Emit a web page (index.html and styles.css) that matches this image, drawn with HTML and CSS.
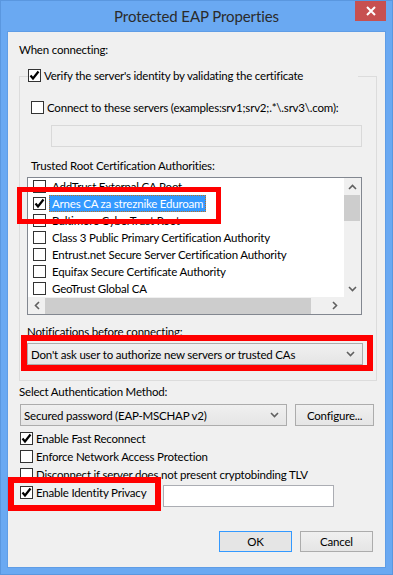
FILE: index.html
```html
<!DOCTYPE html>
<html lang="en">
<head>
    <meta charset="UTF-8">
    <meta name="viewport" content="width=device-width, initial-scale=1.0">
    <title>Protected EAP Properties</title>
    <link rel="stylesheet" href="styles.css">
</head>
<body>
    <div class="window">
        <div class="titlebar">
            <span class="title">Protected EAP Properties</span>
            <span class="close-btn">
                <svg width="10" height="10" viewBox="0 0 10 10"><path d="M1 1 L9 9 M9 1 L1 9" stroke="#fff" stroke-width="2"/></svg>
            </span>
        </div>
        <div class="client">
            <div class="label top-label">When connecting:</div>

            <div class="group">
                <div class="group-head">
                    <span class="box checked"><svg viewBox="0 0 11 11"><path d="M1.5 5.5 L4 8.5 L9.5 1.5" /></svg></span>
                    <span>Verify the server's identity by validating the certificate</span>
                </div>
                <div class="check-row servers-row">
                    <span class="box"></span>
                    <span>Connect to these servers (examples:srv1;srv2;.*\.srv3\.com):</span>
                </div>
                <div class="textbox disabled servers-input"></div>
                <div class="label inner-label">Trusted Root Certification Authorities:</div>

                <div class="listbox">
                    <div class="list-main">
                        <div class="rows">
                            <div class="row"><span class="box"></span><span class="item">AddTrust External CA Root</span></div>
                            <div class="row"><span class="box checked"><svg viewBox="0 0 11 11"><path d="M1.5 5.5 L4 8.5 L9.5 1.5" /></svg></span><span class="item selected">Arnes CA za streznike Eduroam</span></div>
                            <div class="row"><span class="box"></span><span class="item">Baltimore CyberTrust Root</span></div>
                            <div class="row"><span class="box"></span><span class="item">Class 3 Public Primary Certification Authority</span></div>
                            <div class="row"><span class="box"></span><span class="item">Entrust.net Secure Server Certification Authority</span></div>
                            <div class="row"><span class="box"></span><span class="item">Equifax Secure Certificate Authority</span></div>
                            <div class="row"><span class="box"></span><span class="item">GeoTrust Global CA</span></div>
                        </div>
                        <div class="vscroll">
                            <span class="arrow"><svg width="9" height="6" viewBox="0 0 9 6"><path d="M1 5 L4.5 1.5 L8 5" /></svg></span>
                            <span class="vthumb"></span>
                            <span class="vtrack"></span>
                            <span class="arrow"><svg width="9" height="6" viewBox="0 0 9 6"><path d="M1 1 L4.5 4.5 L8 1" /></svg></span>
                        </div>
                    </div>
                    <div class="hscroll-row">
                        <div class="hscroll">
                            <span class="arrow"><svg width="6" height="9" viewBox="0 0 6 9"><path d="M5 1 L1.5 4.5 L5 8" /></svg></span>
                            <span class="hthumb"></span>
                            <span class="arrow"><svg width="6" height="9" viewBox="0 0 6 9"><path d="M1 1 L4.5 4.5 L1 8" /></svg></span>
                        </div>
                        <div class="corner"></div>
                    </div>
                </div>

                <div class="label inner-label notif-label">Notifications before connecting:</div>
                <div class="combo notif-combo">
                    <span>Don't ask user to authorize new servers or trusted CAs</span>
                    <svg width="9" height="6" viewBox="0 0 9 6"><path d="M1 1 L4.5 4.5 L8 1" /></svg>
                </div>
            </div>

            <div class="label method-label">Select Authentication Method:</div>
            <div class="auth-row">
                <div class="combo auth-combo">
                    <span>Secured password (EAP-MSCHAP v2)</span>
                    <svg width="9" height="6" viewBox="0 0 9 6"><path d="M1 1 L4.5 4.5 L8 1" /></svg>
                </div>
                <button class="btn configure">Configure...</button>
            </div>

            <div class="options">
                <div class="check-row opt">
                    <span class="box checked"><svg viewBox="0 0 11 11"><path d="M1.5 5.5 L4 8.5 L9.5 1.5" /></svg></span>
                    <span>Enable Fast Reconnect</span>
                </div>
                <div class="check-row opt">
                    <span class="box"></span>
                    <span>Enforce Network Access Protection</span>
                </div>
                <div class="check-row opt">
                    <span class="box"></span>
                    <span>Disconnect if server does not present cryptobinding TLV</span>
                </div>
                <div class="privacy-row">
                    <div class="check-row opt privacy-check">
                        <span class="box checked"><svg viewBox="0 0 11 11"><path d="M1.5 5.5 L4 8.5 L9.5 1.5" /></svg></span>
                        <span>Enable Identity Privacy</span>
                    </div>
                    <div class="textbox privacy-input"></div>
                </div>
            </div>

            <div class="buttons">
                <button class="btn default">OK</button>
                <button class="btn">Cancel</button>
            </div>

            <!-- red annotation boxes -->
            <div class="mark mark-list"></div>
            <div class="mark mark-notif"></div>
            <div class="mark mark-privacy"></div>
        </div>
    </div>
</body>
</html>
```

FILE: styles.css
```css
* {
    box-sizing: border-box;
}
body {
    margin: 0;
    font-family: Lato, "Noto Sans", sans-serif;
    font-size: 11.5px;
    letter-spacing: -0.2px;
    color: #000;
}
.window {
    width: 393px;
    height: 575px;
    background-color: #6aa9f2;
    border: 1px solid #5a97df;
    padding: 0 6px 6px 6px;
    display: flex;
    flex-direction: column;
}
.titlebar {
    height: 30px;
    position: relative;
    display: flex;
    align-items: center;
    justify-content: center;
}
.title {
    font-size: 15px;
    letter-spacing: -0.1px;
    color: #2b2b2b;
    margin-top: -1px;
}
.close-btn {
    position: absolute;
    right: 0;
    top: 0;
    width: 31px;
    height: 20px;
    background-color: #c75050;
    display: flex;
    align-items: center;
    justify-content: center;
}
.client {
    position: relative;
    flex: 1;
    background-color: #f0f0f0;
    border: 1px solid #5f9de6;
    padding: 0 11px 0 11px;
    display: flex;
    flex-direction: column;
}
.label {
    line-height: 16px;
    height: 16px;
    white-space: nowrap;
}
.top-label {
    margin-top: 10px;
}
.group {
    margin-top: 18px;
    border: 1px solid #dcdcdc;
    width: 358px;
    padding-bottom: 15px;
}
.group-head {
    margin-top: -10px;
    margin-left: 8px;
    width: 330px;
    height: 16px;
    background-color: #f0f0f0;
    display: flex;
    align-items: center;
    gap: 3px;
    white-space: nowrap;
}
.box {
    width: 13px;
    height: 13px;
    flex: none;
    border: 1px solid #333;
    background-color: #fff;
    display: inline-flex;
    align-items: center;
    justify-content: center;
}
.box svg {
    width: 11px;
    height: 11px;
}
.box svg path {
    fill: none;
    stroke: #000;
    stroke-width: 2.2;
}
.check-row {
    display: flex;
    align-items: center;
    gap: 3px;
    height: 16px;
    white-space: nowrap;
}
.servers-row {
    margin-top: 16px;
    margin-left: 11px;
}
.textbox {
    height: 22px;
    border: 1px solid #abadb3;
    background-color: #fff;
}
.textbox.disabled {
    border-color: #d9d9d9;
    background-color: #f0f0f0;
}
.servers-input {
    margin-top: 10px;
    margin-left: 31px;
    width: 311px;
}
.inner-label {
    margin-left: 11px;
    margin-top: 11px;
}
.listbox {
    margin-top: 3px;
    margin-left: 7px;
    width: 335px;
    border: 1px solid #828790;
    background-color: #fff;
}
.list-main {
    display: flex;
    height: 119px;
}
.rows {
    width: 316px;
    overflow: hidden;
}
.row {
    height: 17px;
    display: flex;
    align-items: center;
    padding-left: 5px;
    white-space: nowrap;
}
.item {
    margin-left: 3px;
    padding: 0 2px 0 2px;
    line-height: 15px;
    height: 17px;
    border: 1px solid transparent;
}
.item.selected {
    background-color: #3399ff;
    color: #fff;
    border: 1px dotted #c0701e;
}
.vscroll {
    width: 17px;
    background-color: #f0f0f0;
    display: flex;
    flex-direction: column;
}
.arrow {
    display: flex;
    align-items: center;
    justify-content: center;
    width: 16px;
    height: 17px;
    flex: none;
}
.arrow svg path {
    fill: none;
    stroke: #606060;
    stroke-width: 1.6;
}
.vthumb {
    height: 26px;
    width: 16px;
    background-color: #cdcdcd;
}
.vtrack {
    flex: 1;
}
.hscroll-row {
    display: flex;
    height: 17px;
    background-color: #f0f0f0;
}
.hscroll {
    width: 316px;
    display: flex;
    align-items: center;
    padding-left: 1px;
}
.hthumb {
    width: 266px;
    height: 16px;
    background-color: #cdcdcd;
    margin-right: 16px;
}
.corner {
    flex: 1;
}
.notif-label {
    margin-left: 7px;
    margin-top: 9px;
}
.combo {
    height: 22px;
    border: 1px solid #acacac;
    background: linear-gradient(#f0f0f0, #e5e5e5);
    display: flex;
    align-items: center;
    justify-content: space-between;
    padding: 0 7px 0 3px;
    white-space: nowrap;
}
.combo svg path {
    fill: none;
    stroke: #606060;
    stroke-width: 1.6;
}
.notif-combo {
    margin-top: 3px;
    margin-left: 7px;
    width: 336px;
}
.method-label {
    margin-top: 3px;
}
.auth-row {
    margin-top: 4px;
    display: flex;
    gap: 8px;
    margin-left: 1px;
}
.auth-combo {
    width: 268px;
}
.btn {
    font-family: inherit;
    font-size: 11.5px;
    letter-spacing: -0.2px;
    color: #000;
    height: 22px;
    border: 1px solid #acacac;
    background: linear-gradient(#f0f0f0, #e5e5e5);
    padding: 0;
}
.configure {
    width: 79px;
}
.options {
    margin-top: 3px;
    margin-left: 1px;
}
.opt {
    height: 18px;
}
.privacy-row {
    display: flex;
    align-items: flex-start;
}
.privacy-check {
    width: 143px;
}
.privacy-input {
    margin-top: 2px;
    width: 171px;
}
.buttons {
    margin-top: 24px;
    display: flex;
    justify-content: flex-end;
    gap: 8px;
    padding-right: 1px;
}
.buttons .btn {
    width: 73px;
    height: 21px;
}
.btn.default {
    border-color: #3399ff;
    background: #e5e5e5;
}
.mark {
    position: absolute;
    border: 6px solid #ff0000;
}
.mark-list {
    left: 9px;
    top: 155px;
    width: 204px;
    height: 37px;
    border-width: 5px;
}
.mark-notif {
    left: 13px;
    top: 303px;
    width: 352px;
    height: 36px;
}
.mark-privacy {
    left: 0;
    top: 445px;
    width: 153px;
    height: 34px;
}
```
